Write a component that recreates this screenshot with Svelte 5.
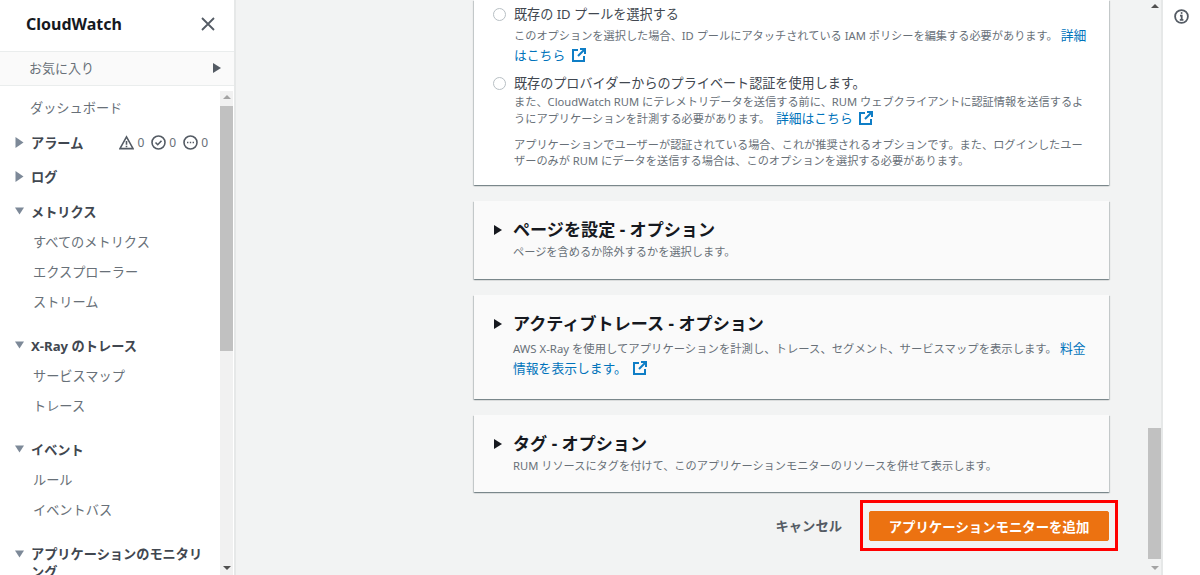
<script>
	const groups = [
		{ label: 'メトリクス', items: ['すべてのメトリクス', 'エクスプローラー', 'ストリーム'] },
		{ label: 'X-Ray のトレース', items: ['サービスマップ', 'トレース'] },
		{ label: 'イベント', items: ['ルール', 'イベントバス'] }
	];
</script>

{#snippet caretRight()}
	<svg class="caret" width="8" height="11" viewBox="0 0 8 11"><path d="M0 0l8 5.5-8 5.5z" /></svg>
{/snippet}

{#snippet caretDown()}
	<svg class="caret" width="10" height="8" viewBox="0 0 10 8"><path d="M0 0h10L5 8z" /></svg>
{/snippet}

{#snippet external()}
	<svg class="ext" width="14" height="14" viewBox="0 0 14 14" fill="none" stroke="#0f7ec6" stroke-width="2">
		<path d="M6 2H1v11h11V8" />
		<path d="M8 1h5v5M13 1L6 8" />
	</svg>
{/snippet}

<div class="page">
	<aside class="side">
		<header class="side-head">
			<span class="brand">CloudWatch</span>
			<svg width="14" height="14" viewBox="0 0 14 14" stroke="#545b64" stroke-width="1.8"><path d="M1 1l12 12M13 1L1 13" /></svg>
		</header>
		<div class="fav">
			<span>お気に入り</span>
			<svg width="8" height="10" viewBox="0 0 8 10" fill="#545b64"><path d="M0 0l8 5-8 5z" /></svg>
		</div>
		<div class="nav-wrap">
			<nav class="nav">
				<div class="dash">ダッシュボード</div>
				<div class="group-head alarm">
					{@render caretRight()}
					<span class="alarm-label">アラーム</span>
					<span class="stats">
						<svg width="15" height="15" viewBox="0 0 16 15" fill="none" stroke="#545b64" stroke-width="1.7"><path d="M8 1.5L15 14H1z" /><path d="M8 6v4M8 11v1.5" /></svg><b>0</b>
						<svg width="15" height="15" viewBox="0 0 15 15" fill="none" stroke="#545b64" stroke-width="1.6"><circle cx="7.5" cy="7.5" r="6.5" /><path d="M4.5 7.5l2.2 2.2 3.8-4" /></svg><b>0</b>
						<svg width="15" height="15" viewBox="0 0 15 15" fill="none" stroke="#545b64" stroke-width="1.6"><circle cx="7.5" cy="7.5" r="6.5" /><path d="M4 7.5h1.4M6.8 7.5h1.4M9.6 7.5H11" /></svg><b>0</b>
					</span>
				</div>
				<div class="group-head log">
					{@render caretRight()}
					<span>ログ</span>
				</div>
				{#each groups as g}
					<div class="group-head">
						{@render caretDown()}
						<span>{g.label}</span>
					</div>
					<ul>
						{#each g.items as item}
							<li>{item}</li>
						{/each}
					</ul>
				{/each}
				<div class="group-head last">
					{@render caretDown()}
					<span>アプリケーションのモニタリング</span>
				</div>
			</nav>
			<div class="scroll side-scroll">
				<i class="up"></i>
				<div class="thumb"></div>
				<i class="down"></i>
			</div>
		</div>
	</aside>

	<main class="main">
		<div class="content">
			<section class="card first">
				<div class="radio-row">
					<span class="radio"></span>
					<div class="radio-body">
						<div class="radio-title">既存の ID プールを選択する</div>
						<p class="lead">このオプションを選択した場合、ID プールにアタッチされている IAM ポリシーを編集する必要があります。 <a href="#a">詳細はこちら {@render external()}</a></p>
					</div>
				</div>
				<div class="radio-row second">
					<span class="radio"></span>
					<div class="radio-body">
						<div class="radio-title">既存のプロバイダーからのプライベート認証を使用します。</div>
						<p class="tight">また、CloudWatch RUM にテレメトリデータを送信する前に、RUM ウェブクライアントに認証情報を送信するようにアプリケーションを計測する必要があります。 <a href="#a">詳細はこちら {@render external()}</a></p>
						<p class="note">アプリケーションでユーザーが認証されている場合、これが推奨されるオプションです。また、ログインしたユーザーのみが RUM にデータを送信する場合は、このオプションを選択する必要があります。</p>
					</div>
				</div>
			</section>

			<section class="card fold">
				<h2><svg width="8" height="10" viewBox="0 0 8 10"><path d="M0 0l8 5-8 5z" /></svg>ページを設定 - オプション</h2>
				<p>ページを含めるか除外するかを選択します。</p>
			</section>

			<section class="card fold">
				<h2><svg width="8" height="10" viewBox="0 0 8 10"><path d="M0 0l8 5-8 5z" /></svg>アクティブトレース - オプション</h2>
				<p class="trace">AWS X-Ray を使用してアプリケーションを計測し、トレース、セグメント、サービスマップを表示します。 <a href="#a">料金情報を表示します。 {@render external()}</a></p>
			</section>

			<section class="card fold">
				<h2><svg width="8" height="10" viewBox="0 0 8 10"><path d="M0 0l8 5-8 5z" /></svg>タグ - オプション</h2>
				<p>RUM リソースにタグを付けて、このアプリケーションモニターのリソースを併せて表示します。</p>
			</section>

			<div class="actions">
				<span class="cancel">キャンセル</span>
				<div class="highlight">
					<button>アプリケーションモニターを追加</button>
				</div>
			</div>
		</div>
		<div class="scroll main-scroll">
			<i class="up"></i>
			<div class="thumb"></div>
			<i class="down"></i>
		</div>
	</main>

	<aside class="tools">
		<svg width="15" height="15" viewBox="0 0 15 15" fill="none" stroke="#545b64" stroke-width="1.8">
			<circle cx="7.5" cy="7.5" r="6.4" />
			<path d="M6 6.6h1.7v4M5.8 10.8h3.6" />
			<path d="M6.8 4h1.6" stroke-width="1.8" />
		</svg>
	</aside>
</div>

<style>
	:global(body) {
		margin: 0;
	}
	.page {
		display: flex;
		width: 1200px;
		height: 575px;
		overflow: hidden;
		font-family: "Noto Sans", "Noto Sans CJK JP", sans-serif;
		color: #545b64;
		background: #f2f3f3;
	}

	.side {
		flex: 0 0 236px;
		box-sizing: border-box;
		border-right: 2px solid #e6e8e8;
		background: #fff;
		display: flex;
		flex-direction: column;
	}
	.side-head {
		height: 51px;
		flex: none;
		box-sizing: border-box;
		display: flex;
		align-items: center;
		justify-content: space-between;
		padding: 0 19px 4px 26px;
	}
	.brand {
		font-size: 16px;
		font-weight: 700;
		color: #16191f;
	}
	.fav {
		height: 35px;
		flex: none;
		box-sizing: border-box;
		background: #fafafa;
		border-top: 1px solid #eaeded;
		border-bottom: 1px solid #eaeded;
		display: flex;
		align-items: center;
		justify-content: space-between;
		padding: 0 13px 2px 29px;
		font-size: 13px;
		color: #687078;
	}
	.nav-wrap {
		flex: 1;
		min-height: 0;
		display: flex;
		padding-top: 5px;
	}
	.nav {
		flex: 1;
		min-width: 0;
		overflow: hidden;
		font-size: 13.2px;
		padding-left: 15px;
	}
	.dash {
		height: 30px;
		line-height: 30px;
		padding-left: 15px;
		margin-top: 2px;
		color: #687078;
	}
	.group-head {
		display: flex;
		align-items: center;
		box-sizing: border-box;
		height: 30px;
		padding-bottom: 2px;
		font-weight: 700;
		color: #414750;
	}
	.group-head > span:not(.stats) {
		margin-left: 7px;
	}
	.caret {
		fill: #7d8998;
		flex: none;
		width: 9px;
	}
	.alarm {
		margin-top: 5px;
	}
	.log {
		margin-top: 4px;
		margin-bottom: 5px;
	}
	.stats {
		margin-left: auto;
		margin-right: 12px;
		display: flex;
		align-items: center;
		font-weight: 400;
	}
	.stats b {
		font-weight: 400;
		font-size: 12px;
		margin: 0 7px 0 3px;
		color: #687078;
	}
	.stats b:last-child {
		margin-right: 0;
	}
	ul {
		list-style: none;
		margin: 0 0 14px;
		padding: 0 0 0 18px;
		color: #687078;
	}
	li {
		height: 30px;
		line-height: 30px;
	}
	.last {
		align-items: flex-start;
		height: auto;
		padding-bottom: 0;
		line-height: 18px;
		margin-top: 20px;
	}
	.last .caret {
		margin-top: 5px;
	}
	.last span {
		width: 180px;
	}

	.scroll {
		flex: none;
		display: flex;
		flex-direction: column;
		align-items: center;
		background: #f1f1f1;
	}
	.scroll i {
		flex: none;
		width: 0;
		height: 0;
		border-left: 4px solid transparent;
		border-right: 4px solid transparent;
	}
	.up {
		margin-top: 4px;
		border-bottom: 4px solid #505050;
	}
	.down {
		margin-top: auto;
		margin-bottom: 5px;
		border-top: 4px solid #505050;
	}
	.thumb {
		background: #c1c1c1;
		width: 100%;
	}
	.side-scroll {
		width: 13px;
		margin-right: 1px;
	}
	.side-scroll .up {
		border-bottom-color: #a3a3a3;
	}
	.side-scroll .thumb {
		margin-top: 7px;
		height: 245px;
	}
	.main {
		flex: 1;
		display: flex;
		min-width: 0;
		border-right: 2px solid #e6e8e8;
	}
	.content {
		flex: 1;
		min-width: 0;
		padding: 0 39px 0 238px;
		box-sizing: border-box;
		overflow: hidden;
	}
	.main-scroll {
		width: 13px;
		background: #f2f3f3;
	}
	.main-scroll .thumb {
		margin-top: 420px;
		height: 131px;
	}
	.main-scroll .down {
		border-top-color: #a3a3a3;
	}

	.card {
		background: #fff;
		box-shadow: 0 1px 1px 0 rgba(0, 28, 36, 0.3), 1px 1px 1px 0 rgba(0, 28, 36, 0.15), -1px 1px 1px 0 rgba(0, 28, 36, 0.15);
		margin-bottom: 16px;
		box-sizing: border-box;
	}
	.first {
		height: 185px;
		padding: 4px 19px 0 19px;
	}
	.radio-row {
		display: flex;
		gap: 8px;
		align-items: flex-start;
	}
	.second {
		margin-top: 7px;
	}
	.radio {
		flex: none;
		box-sizing: border-box;
		width: 13px;
		height: 13px;
		margin-top: 4px;
		border: 1.5px solid #b8bfc4;
		border-radius: 50%;
		background: #fff;
	}
	.radio-body {
		flex: 1;
		min-width: 0;
	}
	.radio-title {
		font-size: 13.1px;
		line-height: 20px;
		color: #414750;
	}
	p {
		margin: 0;
		font-size: 11.2px;
		line-height: 20px;
		color: #687078;
	}
	.lead {
		margin-top: 2px;
	}
	.tight {
		margin-top: 0;
		line-height: 17px;
	}
	.tight a {
		margin-left: 3px;
	}
	.note {
		margin-top: 10px;
		line-height: 15.5px;
	}
	a {
		color: #0073bb;
		text-decoration: none;
		font-size: 12.8px;
		line-height: 16px;
	}
	.ext {
		vertical-align: -2px;
		margin-left: 3px;
	}
	.fold {
		background: #fafafa;
		padding: 17px 20px 0;
	}
	.fold:nth-of-type(2) {
		height: 78px;
	}
	.fold:nth-of-type(3) {
		height: 104px;
	}
	.fold:nth-of-type(4) {
		height: 77px;
	}
	h2 {
		margin: 0;
		display: flex;
		align-items: center;
		font-size: 17.1px;
		line-height: 24px;
		font-weight: 700;
		color: #16191f;
	}
	h2 svg {
		margin-right: 11px;
		fill: #16191f;
	}
	.fold p {
		margin-left: 19px;
		margin-top: 0;
	}
	.fold p.trace {
		margin-top: 3px;
		font-size: 11.35px;
	}
	.actions {
		display: flex;
		align-items: center;
		justify-content: flex-end;
		margin-top: -8px;
		margin-right: -9px;
	}
	.cancel {
		font-size: 13.3px;
		font-weight: 700;
		margin-right: 18px;
	}
	.highlight {
		box-sizing: border-box;
		width: 258px;
		height: 51px;
		border: 3px solid #f00;
		padding: 8px 6px;
	}
	button {
		display: block;
		width: 100%;
		height: 30px;
		border: 1px solid #ec7211;
		border-radius: 2px;
		background: #ec7211;
		color: #fff;
		font-family: inherit;
		font-size: 13.4px;
		font-weight: 700;
		padding: 0;
	}
	.tools {
		flex: 0 0 37px;
		background: #fff;
		display: flex;
		justify-content: center;
		align-items: flex-start;
		padding-top: 9px;
		box-sizing: border-box;
	}
</style>
